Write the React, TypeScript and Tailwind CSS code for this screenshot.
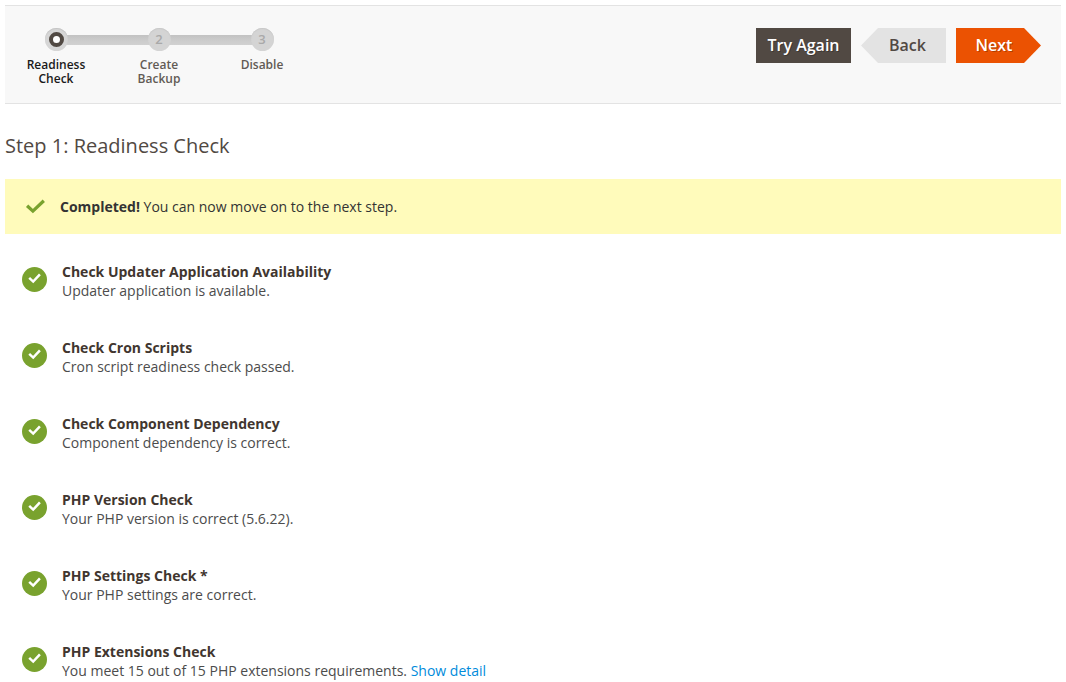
const steps = [
  { label: 'Readiness Check', active: true },
  { label: 'Create Backup', active: false },
  { label: 'Disable', active: false },
];

const checks = [
  { title: 'Check Updater Application Availability', text: 'Updater application is available.' },
  { title: 'Check Cron Scripts', text: 'Cron script readiness check passed.' },
  { title: 'Check Component Dependency', text: 'Component dependency is correct.' },
  { title: 'PHP Version Check', text: 'Your PHP version is correct (5.6.22).' },
  { title: 'PHP Settings Check *', text: 'Your PHP settings are correct.' },
  {
    title: 'PHP Extensions Check',
    text: 'You meet 15 out of 15 PHP extensions requirements.',
    link: 'Show detail',
  },
];

function StepBar() {
  return (
    <ol className="ml-[13px] flex gap-[27px]">
      {steps.map((step, i) => (
        <li
          key={step.label}
          aria-current={step.active ? 'step' : undefined}
          className="relative flex w-[76px] flex-col items-center"
        >
          {i > 0 && (
            <span className="absolute top-[7px] right-1/2 h-[10px] w-[103px] bg-linear-to-b from-[#c2c2c2] via-[#cbcbcb] to-[#d1d1d1]" />
          )}
          <span
            className={`relative z-10 flex size-[23px] items-center justify-center rounded-full text-[13px] font-semibold text-[#a9a9a9] ${
              step.active
                ? 'bg-[#d6d6d6] shadow-[inset_0_1px_1px_#c4c4c4]'
                : 'bg-[#d4d4d4] shadow-[inset_0_1px_1px_#c8c8c8]'
            }`}
          >
            {step.active ? (
              <span className="size-[15px] rounded-full border-4 border-[#514943] bg-white" />
            ) : (
              i + 1
            )}
          </span>
          <span
            className={`mt-[7px] text-center text-[12px] leading-[14px] font-semibold ${
              step.active ? 'text-[#1a1a1a]' : 'text-[#625b55]'
            }`}
          >
            {step.label}
          </span>
        </li>
      ))}
    </ol>
  );
}

function CheckBadge() {
  return (
    <svg viewBox="0 0 25 25" className="mt-[5px] size-[25px] shrink-0" aria-hidden="true">
      <circle cx="12.5" cy="12.5" r="12.5" fill="#79a22e" />
      <path d="M7.2 10.9 L11.2 14.6 L17.9 7.4" fill="none" stroke="#fff" strokeWidth="2.5" />
    </svg>
  );
}

export default function App() {
  return (
    <main className="p-[5px] font-['Open_Sans','Noto_Sans',sans-serif] text-[14px] leading-[19px] text-[#41362f]">
      <header className="flex items-start justify-between border-y border-[#e3e3e3] bg-[#f8f8f8] pt-[22px] pr-[20px] pb-[17px]">
        <StepBar />
        <div className="flex gap-[10px] text-[16px] leading-[35px] font-semibold">
          <button type="button" className="h-[35px] w-[95px] bg-[#514943] text-white [text-shadow:1px_1px_0_rgba(0,0,0,0.25)]">
            Try Again
          </button>
          <button
            type="button"
            className="h-[35px] w-[85px] bg-[#e3e3e3] pl-[8px] text-[#514943] [clip-path:polygon(17px_0,100%_0,100%_100%,17px_100%,0_50%)]"
          >
            Back
          </button>
          <button
            type="button"
            className="h-[35px] w-[85px] bg-[#eb5202] pr-[9px] text-white [clip-path:polygon(0_0,68px_0,100%_50%,68px_100%,0_100%)] [text-shadow:1px_1px_0_rgba(0,0,0,0.25)]"
          >
            Next
          </button>
        </div>
      </header>

      <h1 className="mt-[28px] text-[20px] leading-[28px] text-[#514943]">Step 1: Readiness Check</h1>

      <div role="status" className="mt-[19px] flex items-center bg-[#fffbbb] py-[18px] pl-[20px] text-[#333]">
        <svg viewBox="0 0 20 15" className="h-[15px] w-[20px] shrink-0" aria-hidden="true">
          <path d="M2.1 6.7 L7.9 12.1 L18.8 1.7" fill="none" stroke="#79a22e" strokeWidth="3.3" />
        </svg>
        <p className="ml-[15px]">
          <strong className="font-bold">Completed!</strong> You can now move on to the next step.
        </p>
      </div>

      <ul className="mt-[28px] flex flex-col gap-[38px] pl-[17px]">
        {checks.map((check) => (
          <li key={check.title} className="flex gap-[15px]">
            <CheckBadge />
            <div>
              <h2 className="font-bold">{check.title}</h2>
              <p className="text-[#4c4c4c]">
                {check.text}
                {check.link && (
                  <>
                    {' '}
                    <a href="#detail" className="text-[#008bdb]">
                      {check.link}
                    </a>
                  </>
                )}
              </p>
            </div>
          </li>
        ))}
      </ul>
    </main>
  );
}
